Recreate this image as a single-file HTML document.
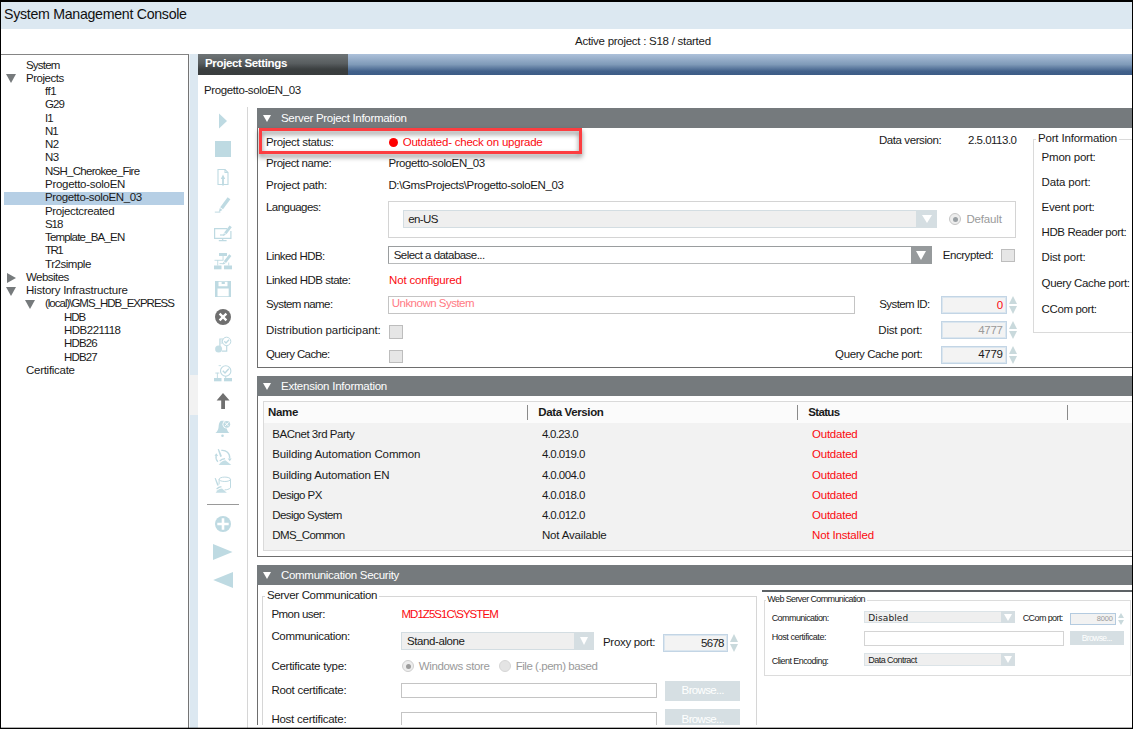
<!DOCTYPE html>
<html>
<head>
<meta charset="utf-8">
<title>System Management Console</title>
<style>
*{box-sizing:border-box;margin:0;padding:0}
html,body{width:1133px;height:729px;overflow:hidden;background:#fff}
body{position:relative;font-family:"Liberation Sans",sans-serif;font-size:11.5px;color:#1a1a1a;letter-spacing:-0.25px}
.a{position:absolute}
.t{position:absolute;white-space:pre;line-height:14px;height:14px}
.red{color:#fb0a10}
.gry{color:#9a9a9a}
.w{color:#fff}
.b{font-weight:bold}
/* frame */
#bt{left:0;top:0;width:1133px;height:2px;background:#000}
#bl{left:0;top:0;width:1px;height:729px;background:#000}
#br{left:1132px;top:0;width:1px;height:729px;background:#000}
#bb{left:0;top:727px;width:1133px;height:2px;background:linear-gradient(rgba(0,0,0,.3) 50%,#000 50%)}
#titlebar{left:1px;top:2px;width:1131px;height:27px;background:#dce8f1}
#title{left:4px;top:5px;font-size:14.2px;line-height:18px;height:18px;letter-spacing:-0.3px;color:#111}
/* tree */
#tree{left:1px;top:54px;width:188px;height:674px;border-top:1px solid #858585;border-right:1px solid #747474;background:#fff}
#split{left:189px;top:54px;width:9px;height:674px;background:#dce8f1;border-left:1px solid #eef3f7}
#grip{left:189px;top:375px;width:9px;height:40px;background:#f2f2f2}
#sel{left:4px;top:192px;width:180px;height:13px;background:#b6cfe5}
.tr{position:absolute;white-space:pre;line-height:14px;height:14px;font-size:11.5px;letter-spacing:-0.2px}
.arr{position:absolute;width:0;height:0}
.dn{border-left:5px solid transparent;border-right:5px solid transparent;border-top:9px solid #7a7a7a}
.rt{border-top:5px solid transparent;border-bottom:5px solid transparent;border-left:9px solid #7a7a7a}
/* main header */
#mh{left:198px;top:54px;width:934px;height:21px;background:linear-gradient(#adc1da 0%,#7f9ab8 50%,#42618b 82%,#3d5c86 100%)}
#tab{left:198px;top:54px;width:150px;height:21px;background:linear-gradient(#6f7577 0%,#585d5f 45%,#3b3f40 72%,#393d3e 100%)}
/* sections */
.sh{position:absolute;left:257px;width:875px;height:20px;background:#757a7d}
.sp{position:absolute;left:257px;width:876px;border-left:1px solid #6e6e6e;border-bottom:1px solid #6e6e6e}
.tri{position:absolute;width:0;height:0;margin-left:-0.5px;border-left:4.6px solid transparent;border-right:4.6px solid transparent;border-top:7.6px solid #fff}
.cb{position:absolute;width:14px;height:14px;background:#e6e6e6;border:1px solid #bdbdbd}
.sb{position:absolute;background:#f3f3f3;border:1px solid #c3d5e5;box-shadow:inset 0 0 0 1px #dbe6ef}
.up{position:absolute;width:0;height:0;border-left:4px solid transparent;border-right:4px solid transparent;border-bottom:8px solid #c9d9dc}
.dw{position:absolute;width:0;height:0;border-left:4px solid transparent;border-right:4px solid transparent;border-top:8px solid #c9d9dc}
.tb{position:absolute;background:#fff;border:1px solid #c4c4c4}
.btn{position:absolute;background:#d6dfe3;color:#fff;text-align:center}
.ico{position:absolute;overflow:visible}
</style>
</head>
<body>
<!-- FRAME -->
<div class="a" id="titlebar"></div>
<div class="t" id="title" style="letter-spacing:-0.295px">System Management Console</div>
<div class="t" style="left:575px;top:34px;letter-spacing:-0.268px">Active project : S18 / started</div>

<!-- TREE -->
<div class="a" id="tree"></div>
<div class="a" id="split"></div>
<div class="a" id="grip"></div>
<div class="a" id="sel"></div>
<div class="tr" style="left:26px;top:58.2px;letter-spacing:-0.807px">System</div>
<div class="tr" style="left:26px;top:71.2px;letter-spacing:-0.468px">Projects</div>
<div class="tr" style="left:45px;top:84.2px;letter-spacing:-0.426px">ff1</div>
<div class="tr" style="left:45px;top:97.2px;letter-spacing:-0.917px">G29</div>
<div class="tr" style="left:45px;top:111.2px;letter-spacing:-0.897px">I1</div>
<div class="tr" style="left:45px;top:124.2px;letter-spacing:-1.152px">N1</div>
<div class="tr" style="left:45px;top:137.2px;letter-spacing:-0.652px">N2</div>
<div class="tr" style="left:45px;top:150.2px;letter-spacing:-0.652px">N3</div>
<div class="tr" style="left:45px;top:164.2px;letter-spacing:-0.732px">NSH_Cherokee_Fire</div>
<div class="tr" style="left:45px;top:177.2px;letter-spacing:-0.285px">Progetto-soloEN</div>
<div class="tr" style="left:45px;top:190.2px;letter-spacing:-0.381px">Progetto-soloEN_03</div>
<div class="tr" style="left:45px;top:204.2px;letter-spacing:-0.354px">Projectcreated</div>
<div class="tr" style="left:45px;top:217.2px;letter-spacing:-1.056px">S18</div>
<div class="tr" style="left:45px;top:230.2px;letter-spacing:-0.813px">Template_BA_EN</div>
<div class="tr" style="left:45px;top:243.2px;letter-spacing:-1.478px">TR1</div>
<div class="tr" style="left:45px;top:257.2px;letter-spacing:-0.463px">Tr2simple</div>
<div class="tr" style="left:26px;top:270.2px;letter-spacing:-0.549px">Websites</div>
<div class="tr" style="left:26px;top:283.2px;letter-spacing:-0.229px">History Infrastructure</div>
<div class="tr" style="left:45px;top:296.2px;letter-spacing:-1.009px">(local)\GMS_HDB_EXPRESS</div>
<div class="tr" style="left:64px;top:310.2px;letter-spacing:-1.027px">HDB</div>
<div class="tr" style="left:64px;top:323.2px;letter-spacing:-0.495px">HDB221118</div>
<div class="tr" style="left:64px;top:336.2px;letter-spacing:-0.856px">HDB26</div>
<div class="tr" style="left:64px;top:350.2px;letter-spacing:-0.856px">HDB27</div>
<div class="tr" style="left:26px;top:363.2px;letter-spacing:-0.280px">Certificate</div>
<div class="arr" style="left:6.2px;top:74.2px;border-left:5.3px solid transparent;border-right:5.3px solid transparent;border-top:9.3px solid #767a7c"></div>
<div class="arr" style="left:6.9px;top:273.1px;border-top:5.4px solid transparent;border-bottom:5.4px solid transparent;border-left:9.2px solid #767a7c"></div>
<div class="arr" style="left:6.1px;top:286.5px;border-left:5.3px solid transparent;border-right:5.3px solid transparent;border-top:9.4px solid #767a7c"></div>
<div class="arr" style="left:25.1px;top:300px;border-left:5.3px solid transparent;border-right:5.3px solid transparent;border-top:9.2px solid #767a7c"></div>

<!-- MAIN HEADER -->
<div class="a" id="mh"></div>
<div class="a" id="tab"></div>
<div class="t w b" style="left:205px;top:56px;font-size:11.5px;letter-spacing:-0.348px">Project Settings</div>
<div class="t" style="left:204px;top:83px;letter-spacing:-0.381px">Progetto-soloEN_03</div>

<!-- TOOLBAR -->
<div class="a" style="left:247px;top:107px;width:1px;height:621px;background:#d6d6d6"></div>
<div class="a" style="left:207px;top:504px;width:32px;height:1px;background:#9a9a9a"></div>
<svg class="ico" style="left:200px;top:100px" width="48" height="500" viewBox="200 100 48 500">
<g fill="#bedae2" stroke="none">
<!-- 1 play -->
<path d="M219 113.5 L227 121 L219 128.5 Z"/>
<!-- 2 stop -->
<rect x="215" y="141" width="16" height="16"/>
<!-- 16, 17 big triangles -->
<path d="M213 544 L232.5 552 L213 560 Z"/>
<path d="M233 572 L213.2 580 L233 588 Z"/>
</g>
<!-- 3 document with arrow -->
<g fill="none" stroke="#bedae2" stroke-width="1.1">
<path d="M218 169.5 H225 L228 172.5 V184.5 H218 Z"/>
<path d="M225 169.5 V172.5 H228"/>
</g>
<path d="M223 174.5 L225.2 179 H223.9 V185.5 H222.1 V179 H220.8 Z" fill="#bedae2"/>
<!-- 4 pen -->
<g fill="#bedae2">
<path d="M227.6 197.2 L230.4 199.3 L223 209.3 L220.2 207.2 Z"/>
<path d="M219.8 207.9 L222.4 209.9 L218.8 212 Z"/>
<rect x="214.8" y="211.6" width="5.6" height="1"/>
</g>
<!-- 5 monitor + pen -->
<g fill="none" stroke="#bedae2" stroke-width="1.2">
<path d="M227 228.7 H214.6 V238.3 H230.9 V231"/>
<path d="M222.7 238.3 V240.4 M218.8 240.6 H226.6"/>
<path d="M220 235 H224"/>
</g>
<g fill="#bedae2">
<path d="M229.6 225.5 L231.8 227.2 L226.4 234.3 L224.2 232.6 Z"/>
<path d="M223.9 233.1 L225.9 234.7 L223 236 Z"/>
</g>
<!-- 6 network + pen -->
<g fill="#bedae2">
<rect x="219" y="253" width="8" height="3"/>
<rect x="214" y="265.5" width="7.5" height="3.8"/>
<rect x="224" y="265.5" width="8" height="3.8"/>
<rect x="214.5" y="259.8" width="9" height="0.9"/>
<rect x="217.3" y="260" width="0.9" height="5.5"/>
<rect x="222.6" y="256" width="0.9" height="4"/>
<rect x="228.3" y="262.5" width="0.9" height="3"/>
<path d="M229.2 254.2 L231.4 255.9 L226 263 L223.8 261.3 Z"/>
<path d="M223.5 261.8 L225.5 263.4 L222.6 264.6 Z"/>
<rect x="219.5" y="263.2" width="4" height="0.9"/>
</g>
<!-- 7 save -->
<path fill="#bedae2" fill-rule="evenodd" d="M215 281 H231 V297 H215 Z M218.5 281.8 H227.5 V286.3 H218.5 Z M217.5 288.5 H228.7 V296.2 H217.5 Z M221.8 282 H224.6 V284 H221.8 Z"/>
<rect x="221.8" y="282" width="2.8" height="2" fill="#bedae2"/>
<!-- 8 delete circle -->
<circle cx="223" cy="317" r="8" fill="#6f6f6f"/>
<path d="M219.6 313.6 L226.4 320.4 M226.4 313.6 L219.6 320.4" stroke="#fff" stroke-width="2.3" fill="none"/>
<!-- 9 doc check circle -->
<g fill="none" stroke="#bedae2" stroke-width="1.2">
<path d="M223.6 339 H219.9 V346.4 M222 351.2 H226.7 V345.6"/>
<circle cx="226.6" cy="341.4" r="4.2" stroke-width="1"/>
<path d="M224.3 341.3 L226 343 L229 339.8" stroke-width="1.3"/>
<path d="M220.6 341 H222.6 M220.6 343 H222.6" stroke-width="0.9"/>
</g>
<circle cx="218.6" cy="349.1" r="3.5" fill="#bedae2" opacity=".9"/>
<!-- 10 network check -->
<g fill="none" stroke="#bedae2" stroke-width="1.1">
<circle cx="225.7" cy="371" r="5.2"/>
<path d="M222.8 370.8 L225 373 L228.8 368.8" stroke-width="1.4"/>
</g>
<g fill="#bedae2">
<rect x="214" y="378" width="7.5" height="3.3"/>
<rect x="224" y="378" width="8" height="3.3"/>
<rect x="215.3" y="372.6" width="4" height="0.9"/>
<rect x="216.9" y="372.8" width="0.9" height="5.2"/>
<rect x="225.3" y="376" width="0.9" height="2"/>
<rect x="218.6" y="365.3" width="2.4" height="0.8"/>
</g>
<!-- 11 up arrow -->
<path d="M223 393 L229.6 400.6 H225 V409 H221.2 V400.6 H216.6 Z" fill="#707070"/>
<!-- 12 bell with x -->
<g fill="#bedae2">
<path d="M221.6 420.8 C219.6 421 218.9 423.6 218.6 427 C218.3 430 217.2 431.7 215.4 432.9 H229.4 C227.8 431.8 227.2 430.4 226.8 428.6 L226.6 421.6 C225.4 420.9 223.4 420.7 221.6 420.8 Z"/>
<circle cx="222.5" cy="435.7" r="1.3"/>
</g>
<circle cx="226.8" cy="424.3" r="4.3" fill="#fff"/>
<circle cx="226.8" cy="424.3" r="3.4" fill="#bedae2"/>
<path d="M224.9 422.4 L228.7 426.2 M228.7 422.4 L224.9 426.2" stroke="#fff" stroke-width="1" fill="none"/>
<!-- 13 broom + circular arrows -->
<g fill="none" stroke="#bedae2" stroke-width="1.3">
<path d="M221.3 450.4 A7.3 7.3 0 0 1 229.7 458.4"/>
<path d="M216.2 455.4 A6.8 6.8 0 0 0 217.9 461.8"/>
</g>
<g fill="#bedae2">
<path d="M227.7 458.4 L231.7 458.6 L229.7 461.2 Z"/>
<path d="M214.5 455.8 L216.3 453.2 L218.2 455.9 Z"/>
<path d="M217.7 449.3 L218.9 448.9 L222 456.3 L220.2 457.1 Z"/>
<path d="M219.3 460.5 Q221.5 458.2 224.8 457.9 L225.3 459.3 Q222 459.7 220 461.6 Z"/>
<path d="M220.7 462.4 Q222.6 460.7 225.4 460.3 L231.3 464.9 H218.7 Z" opacity=".9"/>
</g>
<!-- 14 broom + cylinder -->
<g fill="none" stroke="#bedae2" stroke-width="1">
<ellipse cx="224.8" cy="479.3" rx="5.7" ry="2.2"/>
<path d="M219.1 479.3 V484.4 M230.5 479.3 V487.8 C229 489.3 227 489.8 224.6 489.9"/>
</g>
<g fill="#bedae2">
<path d="M214.6 478.3 L215.7 477.9 L218.8 485.2 L217.3 485.8 Z"/>
<path d="M216.2 488.4 Q218.3 486.2 221.2 486 L221.7 487.3 Q219 487.6 217 489.5 Z"/>
<path d="M217.5 490.2 Q219.4 488.6 222 488.4 L226.9 492.8 H215.7 Z" opacity=".9"/>
</g>
<!-- 15 plus circle -->
<circle cx="223" cy="524" r="8" fill="#bedae2"/>
<path d="M223 518.3 V529.7 M217.3 524 H228.7" stroke="#fff" stroke-width="2.6" fill="none"/>
</svg>


<div class="sh" style="top:108px"></div>
<div class="tri" style="left:263px;top:115px"></div>
<div class="t w" style="left:281px;top:111px;letter-spacing:-0.307px">Server Project Information</div>
<div class="sp" style="top:128px;height:240px"></div>
<!-- red highlight box -->
<div class="a" style="left:259px;top:128px;width:323px;height:26px;border:3px solid #fc3d40;filter:drop-shadow(0 3px 2.5px rgba(0,0,0,.5))"></div>
<div class="t" style="left:266px;top:134.7px;letter-spacing:-0.345px">Project status:</div>
<div class="a" style="left:388.6px;top:137.8px;width:9.6px;height:9.6px;border-radius:50%;background:#fe0000"></div>
<div class="t red" style="left:402.7px;top:135px;letter-spacing:-0.230px">Outdated- check on upgrade</div>
<div class="t" style="left:266px;top:156.1px;letter-spacing:-0.435px">Project name:</div>
<div class="t" style="left:388.4px;top:155.8px;letter-spacing:-0.398px">Progetto-soloEN_03</div>
<div class="t" style="left:266px;top:178.3px;letter-spacing:-0.291px">Project path:</div>
<div class="t" style="left:388.4px;top:178.3px;letter-spacing:-0.366px">D:\GmsProjects\Progetto-soloEN_03</div>
<div class="t" style="left:266px;top:199.5px;letter-spacing:-0.552px">Languages:</div>
<div class="a" style="left:388px;top:201px;width:628px;height:37px;border:1px solid #d4d4d4;background:#fff"></div>
<div class="a" style="left:403px;top:210px;width:534px;height:18px;background:#efefef;border:1px solid #d3dde2"></div>
<div class="a" style="left:916px;top:210px;width:21px;height:18px;background:#d5dee2"></div>
<div class="a" style="left:922.3px;top:214.8px;width:0;height:0;border-left:5px solid transparent;border-right:5px solid transparent;border-top:8px solid #fff"></div>
<div class="t" style="left:408.2px;top:212.4px;letter-spacing:-0.602px">en-US</div>
<div class="a" style="left:949px;top:213px;width:12px;height:12px;border-radius:50%;border:1px solid #c6c6c6;background:#ededed"></div>
<div class="a" style="left:952.5px;top:216.5px;width:5px;height:5px;border-radius:50%;background:#9aa0a4"></div>
<div class="t gry" style="left:966.4px;top:212.3px;letter-spacing:-0.148px">Default</div>
<div class="t" style="left:266px;top:249px;letter-spacing:-0.524px">Linked HDB:</div>
<div class="a" style="left:388px;top:246px;width:544px;height:18px;background:#fff;border:1px solid #9a9d9f;border-bottom-color:#b8babb"></div>
<div class="a" style="left:911px;top:246px;width:21px;height:18px;background:#969a9c"></div>
<div class="a" style="left:916.4px;top:250.5px;width:0;height:0;border-left:5.4px solid transparent;border-right:5.4px solid transparent;border-top:9px solid #fff"></div>
<div class="t" style="left:393.7px;top:247.6px;letter-spacing:-0.533px">Select a database...</div>
<div class="t" style="left:942.7px;top:248.2px;letter-spacing:-0.428px">Encrypted:</div>
<div class="cb" style="left:1001px;top:249px;height:13px"></div>
<div class="t" style="left:266px;top:273px;letter-spacing:-0.487px">Linked HDB state:</div>
<div class="t red" style="left:389px;top:273px;letter-spacing:-0.150px">Not configured</div>
<div class="t" style="left:266px;top:297px;letter-spacing:-0.583px">System name:</div>
<div class="tb" style="left:388px;top:296px;width:467px;height:18px"></div>
<div class="t" style="left:391.7px;top:296px;color:#ff7a84;letter-spacing:-0.506px">Unknown System</div>
<div class="t" style="left:879.2px;top:297.4px;letter-spacing:-0.573px">System ID:</div>
<div class="sb" style="left:941px;top:296px;width:66px;height:18px"></div>
<div class="t red" style="left:996px;top:298px;width:7px;text-align:right">0</div>
<div class="up" style="left:1008.5px;top:296.2px"></div><div class="dw" style="left:1008.5px;top:306px"></div>
<div class="t" style="left:266px;top:323px;letter-spacing:-0.091px">Distribution participant:</div>
<div class="cb" style="left:389px;top:325px"></div>
<div class="t" style="left:878.3px;top:323px;letter-spacing:-0.202px">Dist port:</div>
<div class="sb" style="left:941px;top:321px;width:66px;height:18px"></div>
<div class="t gry" style="left:978.3px;top:323px;letter-spacing:-0.348px">4777</div>
<div class="up" style="left:1008.5px;top:321.2px"></div><div class="dw" style="left:1008.5px;top:331px"></div>
<div class="t" style="left:266px;top:346.5px;letter-spacing:-0.604px">Query Cache:</div>
<div class="cb" style="left:389px;top:349.5px;height:13.5px"></div>
<div class="t" style="left:835.1px;top:347.3px;letter-spacing:-0.398px">Query Cache port:</div>
<div class="sb" style="left:941px;top:346px;width:66px;height:17.5px"></div>
<div class="t" style="left:978.3px;top:346.6px;letter-spacing:-0.348px">4779</div>
<div class="up" style="left:1008.5px;top:346px"></div><div class="dw" style="left:1008.5px;top:355.6px"></div>
<div class="t" style="left:878.9px;top:132.6px;letter-spacing:-0.413px">Data version:</div>
<div class="t" style="left:968px;top:132.6px;letter-spacing:-0.502px">2.5.0113.0</div>
<!-- Port Information group -->
<div class="a" style="left:1033px;top:139px;width:110px;height:194px;border:1px solid #dadada"></div>
<div class="a" style="left:1036px;top:132px;width:83px;height:12px;background:#fff"></div>
<div class="t" style="left:1038px;top:131px;letter-spacing:-0.177px">Port Information</div>
<div class="t" style="left:1041.6px;top:149.8px;letter-spacing:-0.225px">Pmon port:</div>
<div class="t" style="left:1041.6px;top:175.3px;letter-spacing:-0.150px">Data port:</div>
<div class="t" style="left:1041.6px;top:200.3px;letter-spacing:-0.239px">Event port:</div>
<div class="t" style="left:1041.6px;top:225px;letter-spacing:-0.419px">HDB Reader port:</div>
<div class="t" style="left:1041.6px;top:250px;letter-spacing:-0.202px">Dist port:</div>
<div class="t" style="left:1041.6px;top:276px;letter-spacing:-0.351px">Query Cache port:</div>
<div class="t" style="left:1041.6px;top:302px;letter-spacing:-0.380px">CCom port:</div>


<div class="sh" style="top:376px"></div>
<div class="tri" style="left:263px;top:383px"></div>
<div class="t w" style="left:281px;top:379px;letter-spacing:-0.249px">Extension Information</div>
<div class="sp" style="top:396px;height:161px"></div>
<div class="a" style="left:263px;top:401px;width:880px;height:150px;background:#f2f2f2;border:1px solid #dadada"></div>
<div class="a" style="left:264px;top:402px;width:868px;height:21px;background:#fbfbfb"></div>
<div class="a" style="left:527px;top:405px;width:1px;height:15px;background:#8a8a8a"></div>
<div class="a" style="left:797px;top:405px;width:1px;height:15px;background:#8a8a8a"></div>
<div class="a" style="left:1067px;top:405px;width:1px;height:15px;background:#8a8a8a"></div>
<div class="t b" style="left:268px;top:405px;letter-spacing:-0.332px">Name</div>
<div class="t b" style="left:538.3px;top:405px;letter-spacing:-0.373px">Data Version</div>
<div class="t b" style="left:808.2px;top:405px;letter-spacing:-0.643px">Status</div>
<div class="t" style="left:272.3px;top:427px;letter-spacing:-0.468px">BACnet 3rd Party</div>
<div class="t" style="left:541.9px;top:427px;letter-spacing:-0.685px">4.0.23.0</div>
<div class="t red" style="left:812px;top:427px;letter-spacing:-0.229px">Outdated</div>
<div class="t" style="left:272.3px;top:447px;letter-spacing:-0.135px">Building Automation Common</div>
<div class="t" style="left:541.9px;top:447px;letter-spacing:-0.563px">4.0.019.0</div>
<div class="t red" style="left:812px;top:447px;letter-spacing:-0.229px">Outdated</div>
<div class="t" style="left:272.3px;top:468px;letter-spacing:-0.174px">Building Automation EN</div>
<div class="t" style="left:541.9px;top:468px;letter-spacing:-0.563px">4.0.004.0</div>
<div class="t red" style="left:812px;top:468px;letter-spacing:-0.229px">Outdated</div>
<div class="t" style="left:272.3px;top:488px;letter-spacing:-0.527px">Desigo PX</div>
<div class="t" style="left:541.9px;top:488px;letter-spacing:-0.563px">4.0.018.0</div>
<div class="t red" style="left:812px;top:488px;letter-spacing:-0.229px">Outdated</div>
<div class="t" style="left:272.3px;top:508px;letter-spacing:-0.603px">Desigo System</div>
<div class="t" style="left:541.9px;top:508px;letter-spacing:-0.563px">4.0.012.0</div>
<div class="t red" style="left:812px;top:508px;letter-spacing:-0.229px">Outdated</div>
<div class="t" style="left:272.3px;top:528px;letter-spacing:-0.631px">DMS_Common</div>
<div class="t" style="left:541.9px;top:528px;letter-spacing:-0.171px">Not Available</div>
<div class="t red" style="left:812px;top:528px;letter-spacing:-0.157px">Not Installed</div>

<div class="sh" style="top:565px"></div>
<div class="tri" style="left:263px;top:572px"></div>
<div class="t w" style="left:281px;top:568px;letter-spacing:-0.302px">Communication Security</div>
<div class="a" style="left:257px;top:585px;width:1px;height:140px;background:#6e6e6e"></div>
<!-- Server Communication group -->
<div class="a" style="left:262px;top:596px;width:495px;height:140px;border:1px solid #d6d6d6"></div>
<div class="a" style="left:265px;top:589px;width:114px;height:12px;background:#fff"></div>
<div class="t" style="left:267px;top:588px;letter-spacing:-0.348px">Server Communication</div>
<div class="t" style="left:271.4px;top:607px;letter-spacing:-0.541px">Pmon user:</div>
<div class="t red" style="left:401.4px;top:607px;letter-spacing:-0.944px">MD1Z5S1C\SYSTEM</div>
<div class="t" style="left:271.4px;top:629px;letter-spacing:-0.328px">Communication:</div>
<div class="a" style="left:401px;top:632px;width:193px;height:18px;background:#efefef;border:1px solid #d3dde2"></div>
<div class="a" style="left:574px;top:632px;width:20px;height:18px;background:#d5dee2"></div>
<div class="a" style="left:580.4px;top:637px;width:0;height:0;border-left:4.8px solid transparent;border-right:4.8px solid transparent;border-top:8px solid #fff"></div>
<div class="t" style="left:407px;top:633.7px;letter-spacing:-0.412px">Stand-alone</div>
<div class="t" style="left:603px;top:635.3px;letter-spacing:-0.310px">Proxy port:</div>
<div class="sb" style="left:663px;top:634px;width:65px;height:18px"></div>
<div class="t" style="left:701px;top:635.5px;letter-spacing:-0.698px">5678</div>
<div class="up" style="left:730px;top:634px"></div><div class="dw" style="left:730px;top:643.5px"></div>
<div class="t" style="left:271.4px;top:659px;letter-spacing:-0.265px">Certificate type:</div>
<div class="a" style="left:402px;top:660px;width:12px;height:12px;border-radius:50%;border:1px solid #cfcfcf;background:#ededed"></div>
<div class="a" style="left:405.5px;top:663.5px;width:5px;height:5px;border-radius:50%;background:#9c9c9c"></div>
<div class="t gry" style="left:418.7px;top:659px;letter-spacing:-0.348px">Windows store</div>
<div class="a" style="left:499px;top:660px;width:12px;height:12px;border-radius:50%;border:1px solid #d6d6d6;background:#e4e4e4"></div>
<div class="t gry" style="left:515.7px;top:659px;letter-spacing:-0.458px">File (.pem) based</div>
<div class="t" style="left:271.4px;top:683px;letter-spacing:-0.289px">Root certificate:</div>
<div class="tb" style="left:401px;top:683px;width:256px;height:15px"></div>
<div class="btn" style="left:665px;top:681px;width:75px;height:20px"></div>
<div class="t w" style="left:681.6px;top:683px;letter-spacing:-0.637px">Browse...</div>
<div class="t" style="left:271.4px;top:711.5px;letter-spacing:-0.250px">Host certificate:</div>
<div class="tb" style="left:401px;top:712px;width:256px;height:20px"></div>
<div class="btn" style="left:665px;top:709px;width:75px;height:20px"></div>
<div class="t w" style="left:681.6px;top:712px;letter-spacing:-0.637px">Browse...</div>
<!-- Web Server Communication (pasted inset) -->
<div class="a" style="left:762px;top:590px;width:371px;height:2px;background:#5d6265"></div>
<div class="a" style="left:764px;top:600px;width:367px;height:76px;border:1px solid #dcdcdc"></div>
<div class="a" style="left:766px;top:594px;width:101px;height:10px;background:#fff"></div>
<div class="t" style="left:767.3px;top:592.3px;font-size:9px;letter-spacing:-0.612px">Web Server Communication</div>
<div class="t" style="left:771.7px;top:611px;font-size:9px;letter-spacing:-0.574px">Communication:</div>
<div class="a" style="left:864px;top:610.7px;width:150.5px;height:12.6px;background:#efefef;border:1px solid #dbe3e7"></div>
<div class="a" style="left:1001px;top:610.7px;width:13.5px;height:12.6px;background:#d5dee2"></div>
<div class="a" style="left:1003.5px;top:614px;width:0;height:0;border-left:4.5px solid transparent;border-right:4.5px solid transparent;border-top:7px solid #fff"></div>
<div class="t" style="left:868.3px;top:611.3px;font-size:9px;font-family:'DejaVu Sans',sans-serif;letter-spacing:0.111px">Disabled</div>
<div class="t" style="left:1022.7px;top:611px;font-size:9px;letter-spacing:-0.602px">CCom port:</div>
<div class="a" style="left:1070px;top:613px;width:46px;height:11.5px;background:#f2f2f2;border:1px solid #b4cbe0"></div>
<div class="t gry" style="left:1096.7px;top:611.7px;font-size:7.5px;letter-spacing:-0.172px">8000</div>
<div class="a" style="left:1118px;top:613px;width:0;height:0;border-left:3px solid transparent;border-right:3px solid transparent;border-bottom:5px solid #c9d9dc"></div>
<div class="a" style="left:1118px;top:619.5px;width:0;height:0;border-left:3px solid transparent;border-right:3px solid transparent;border-top:5px solid #c9d9dc"></div>
<div class="t" style="left:771.7px;top:630.3px;font-size:9px;letter-spacing:-0.455px">Host certificate:</div>
<div class="a" style="left:864px;top:631px;width:199.5px;height:15px;background:#fff;border:1px solid #d4d4d4"></div>
<div class="btn" style="left:1070px;top:631px;width:53.5px;height:14px"></div>
<div class="t w" style="left:1081.7px;top:631.3px;font-size:8.5px;letter-spacing:-0.604px">Browse...</div>
<div class="t" style="left:771.7px;top:654px;font-size:9px;letter-spacing:-0.559px">Client Encoding:</div>
<div class="a" style="left:864px;top:653.3px;width:150.5px;height:12.5px;background:#efefef;border:1px solid #dbe3e7"></div>
<div class="a" style="left:1001px;top:653.3px;width:13.5px;height:12.5px;background:#d5dee2"></div>
<div class="a" style="left:1003.5px;top:656.3px;width:0;height:0;border-left:4.5px solid transparent;border-right:4.5px solid transparent;border-top:7px solid #fff"></div>
<div class="t" style="left:868.3px;top:653px;font-size:9px;letter-spacing:-0.549px">Data Contract</div>

<div class="a" style="left:248px;top:725px;width:884px;height:3px;background:#fff"></div>


<!-- borders on top -->
<div class="a" id="bt"></div><div class="a" id="bl"></div><div class="a" id="br"></div><div class="a" id="bb"></div>
</body>
</html>
